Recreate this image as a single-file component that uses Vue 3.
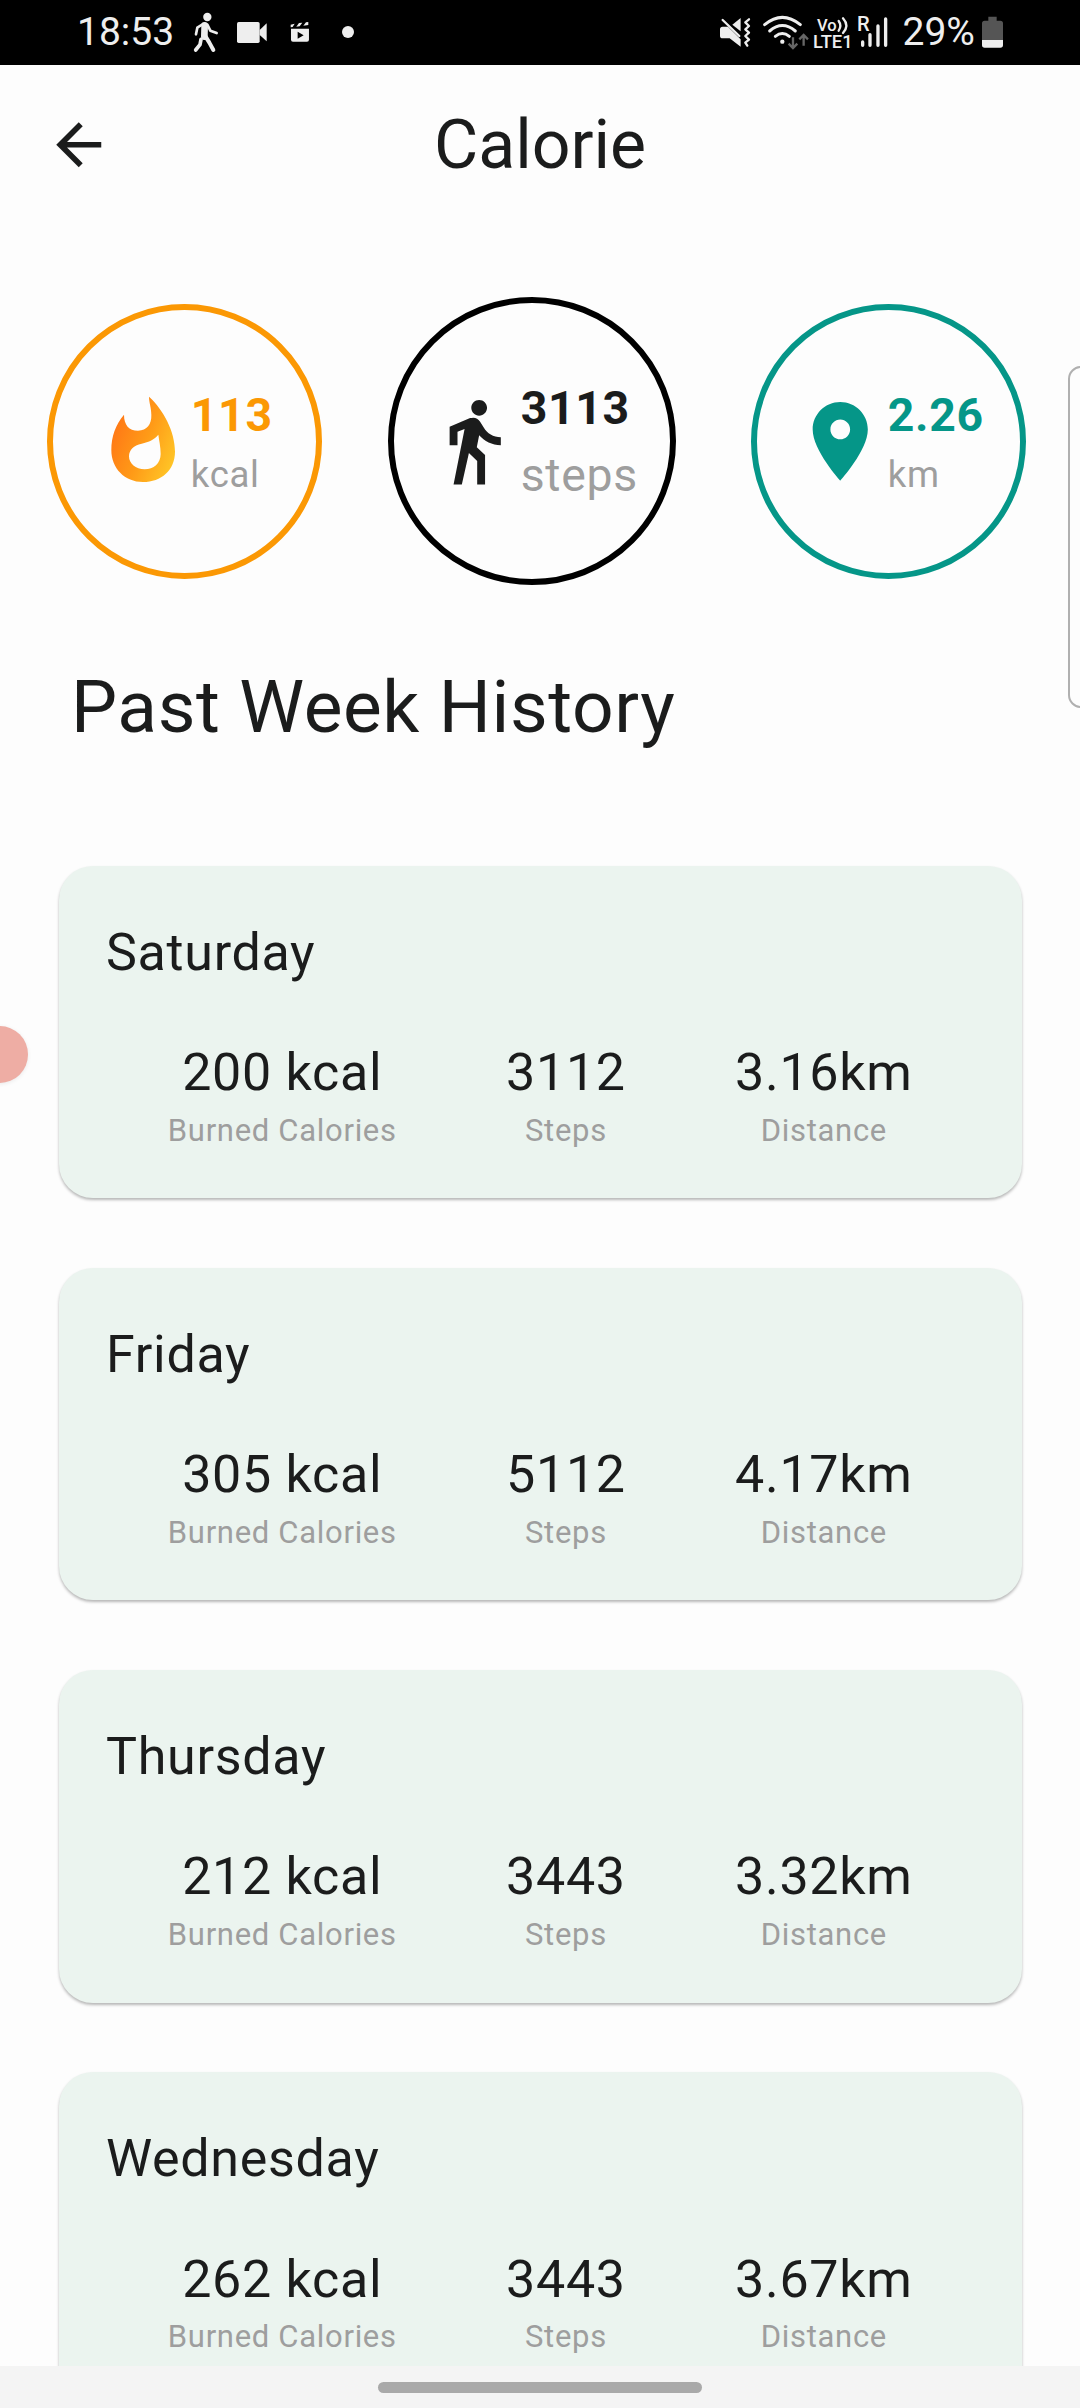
<template>
  <div class="screen">
    <!-- Status bar -->
    <div class="status-bar">
      <div class="status-left">
        <span class="clock">18:53</span>
        <svg class="walk" viewBox="400 0 78 198">
          <circle cx="443" cy="51" r="12.5" fill="#eee" />
          <g fill="none" stroke="#eee" stroke-linecap="round" stroke-linejoin="round">
            <path d="M435 76L434 110" stroke-width="20" />
            <path d="M430 72L413 83L409 103" stroke-width="8" />
            <path d="M443 74L452 92L471 99" stroke-width="8" />
            <path d="M438 110L449 128L461 150" stroke-width="12" />
            <path d="M424 118L421 134L408 150" stroke-width="11" />
          </g>
        </svg>
        <svg class="video" viewBox="533 0 89 198">
          <rect x="533" y="66" width="68" height="63" rx="5" fill="#eee" />
          <path d="M601 90L622 70V124L601 105Z" fill="#eee" />
        </svg>
        <svg class="clapper" viewBox="690 0 58 198">
          <path d="M693 86H747V119Q747 125 741 125H699Q693 125 693 119ZM713 95V116L731 105.5Z" fill="#eee" fill-rule="evenodd" />
          <path d="M692 82V74L704 71L698 81ZM709 80L717 69L727 68L719 79ZM730 77L738 67L745 66V75Z" fill="#eee" />
        </svg>
        <span class="dot"></span>
      </div>

      <div class="status-right">
        <svg class="mute" viewBox="60 0 94 198">
          <path d="M60 88Q60 80 68 80H84L122 118V140L89 115H68Q60 115 60 107Z" fill="#eee" />
          <path d="M122 54V94L97 74Z" fill="#eee" />
          <path d="M68 60L118 108" stroke="#eee" stroke-width="7" stroke-linecap="round" />
          <path d="M147 58L136 67L147 78L136 88L147 98L136 108L147 119L136 128L142 137" fill="none" stroke="#eee" stroke-width="7" stroke-linejoin="round" stroke-linecap="round" />
        </svg>
        <svg class="wifi" viewBox="190 0 136 198">
          <g fill="none" stroke="#eee" stroke-width="9" stroke-linecap="round">
            <path d="M195 74Q248 30 302 74" />
            <path d="M210 93Q248 60 287 93" />
            <path d="M227 109Q248 92 269 109" />
          </g>
          <circle cx="248" cy="125" r="6.5" fill="#eee" />
          <g fill="none" stroke="#666" stroke-width="7">
            <path d="M280 112V142M267 131L280 144L293 131" />
            <path d="M312 137V106M299 118L312 105L325 118" />
          </g>
        </svg>
        <svg class="volte" viewBox="340 0 120 198">
          <text x="352" y="93" font-size="51" textLength="59" lengthAdjust="spacingAndGlyphs" class="status-glyph">Vo</text>
          <g fill="none" stroke="#eee" stroke-width="7" stroke-linecap="round">
            <path d="M417 63Q427 77 417 92" />
            <path d="M430 55Q450 77 430 99" />
          </g>
          <text x="340" y="144" font-size="53" textLength="119" lengthAdjust="spacingAndGlyphs" class="status-glyph">LTE1</text>
        </svg>
        <svg class="signal" viewBox="472 0 94 198">
          <text x="472" y="94" font-size="58" textLength="38" lengthAdjust="spacingAndGlyphs" class="status-glyph">R</text>
          <path d="M489 126V136M511 104V136M535 78V136M558 57V136" stroke="#eee" stroke-width="10" stroke-linecap="round" />
        </svg>
        <span class="battery-level">29%</span>
        <svg class="battery" viewBox="846 0 63 198">
          <path d="M865 50H890V62H901Q909 62 909 70V122H846V70Q846 62 854 62H865Z" fill="#555" />
          <path d="M846 120H909V135Q909 143 901 143H854Q846 143 846 135Z" fill="#eee" />
        </svg>
      </div>
    </div>

    <!-- App bar -->
    <header class="app-bar">
      <svg class="back" viewBox="0 0 24 24">
        <path d="M20 11H7.83l5.59-5.59L12 4l-8 8 8 8 1.41-1.41L7.83 13H20v-2z" />
      </svg>
      <h1>Calorie</h1>
    </header>

    <main class="content">
      <section class="rings">
        <div
          v-for="ring in rings"
          :key="ring.unit"
          class="ring"
          :class="`ring-${ring.type}`"
        >
          <svg v-if="ring.type === 'calorie'" class="ring-icon" viewBox="199 312 283.5 283.5">
            <defs>
              <linearGradient id="flame" x1="0" y1="0.3" x2="1" y2="0.85">
                <stop offset="0" stop-color="#ff7416" />
                <stop offset="0.5" stop-color="#ff9a17" />
                <stop offset="1" stop-color="#ffc928" />
              </linearGradient>
            </defs>
            <path
              fill="url(#flame)"
              fill-rule="evenodd"
              d="M358 320C402 360 436 425 436 485C436 540 395 576 340 576C285 576 245 535 245 480C245 440 258 403 283 374C283 405 298 422 325 422C352 422 366 402 365 375C365 352 358 338 358 320ZM386 434C388 450 393 470 393 492C393 520 372 538 345 538C318 538 298 521 298 499C298 480 312 466 336 461C358 456 374 448 386 434Z"
            />
          </svg>
          <svg v-else-if="ring.type === 'steps'" class="ring-icon" viewBox="0 0 24 24">
            <path d="M13.5 5.5c1.1 0 2-.9 2-2s-.9-2-2-2-2 .9-2 2 .9 2 2 2zM9.8 8.9L7 23h2.1l1.8-8 2.1 2v6h2v-7.5l-2.1-2 .6-3C14.8 12 16.8 13 19 13v-2c-1.9 0-3.5-1-4.3-2.4l-1-1.6c-.4-.6-1-1-1.7-1-.3 0-.5.1-.8.1L6 8.3V13h2V9.6l1.8-.7" />
          </svg>
          <svg v-else class="ring-icon" viewBox="0 0 24 24">
            <path d="M12 2C8.13 2 5 5.13 5 9c0 5.25 7 13 7 13s7-7.75 7-13c0-3.87-3.13-7-7-7zm0 9.5c-1.38 0-2.5-1.12-2.5-2.5s1.12-2.5 2.5-2.5 2.5 1.12 2.5 2.5-1.12 2.5-2.5 2.5z" />
          </svg>
          <div class="ring-text">
            <span class="ring-value">{{ ring.value }}</span>
            <span class="ring-unit">{{ ring.unit }}</span>
          </div>
        </div>
      </section>

      <h2>Past Week History</h2>

      <article v-for="item in history" :key="item.day" class="card">
        <h3>{{ item.day }}</h3>
        <div class="stats">
          <div class="stat">
            <span class="stat-value">{{ item.calories }} kcal</span>
            <span class="stat-label">Burned Calories</span>
          </div>
          <div class="stat">
            <span class="stat-value">{{ item.steps }}</span>
            <span class="stat-label">Steps</span>
          </div>
          <div class="stat">
            <span class="stat-value">{{ item.distance }}km</span>
            <span class="stat-label">Distance</span>
          </div>
        </div>
      </article>
    </main>

    <div class="nav-bar"><span class="nav-handle"></span></div>

    <!-- System overlays -->
    <div class="edge-panel"></div>
    <div class="bubble"></div>
  </div>
</template>

<script setup>
const rings = [
  { type: 'calorie', value: '113', unit: 'kcal' },
  { type: 'steps', value: '3113', unit: 'steps' },
  { type: 'distance', value: '2.26', unit: 'km' }
]

const history = [
  { day: 'Saturday', calories: 200, steps: 3112, distance: 3.16 },
  { day: 'Friday', calories: 305, steps: 5112, distance: 4.17 },
  { day: 'Thursday', calories: 212, steps: 3443, distance: 3.32 },
  { day: 'Wednesday', calories: 262, steps: 3443, distance: 3.67 }
]
</script>

<style>
body {
  margin: 0;
  background: #fdfdfd;
}
</style>

<style scoped>
.screen {
  position: relative;
  display: flex;
  flex-direction: column;
  width: 1080px;
  height: 2408px;
  overflow: hidden;
  background: #fdfdfd;
  color: #1b1c1c;
  font-family: Roboto, "Liberation Sans", sans-serif;
  letter-spacing: 0.7px;
}
h1, h2, h3 {
  margin: 0;
  font-weight: 400;
}
svg {
  display: block;
  flex: none;
}

/* Status bar */
.status-bar {
  display: flex;
  flex: none;
  justify-content: space-between;
  height: 65px;
  padding: 0 77px;
  background: #000;
  color: #eee;
  letter-spacing: 0;
}
.status-left,
.status-right {
  display: flex;
  height: 66px;
}
.status-bar svg {
  height: 66px;
}
.clock,
.battery-level {
  font-size: 39px;
  line-height: 65px;
}
.clock {
  width: 116px;
}
.status-glyph {
  fill: #eee;
  font-weight: 500;
}
.walk { width: 26px; }
.video { width: 29.7px; margin-left: 18.4px; }
.clapper { width: 19.3px; margin-left: 22.6px; }
.dot {
  width: 12px;
  height: 12px;
  margin: 26px 0 0 33px;
  border-radius: 50%;
  background: #eee;
}
.mute { width: 31.3px; }
.wifi { width: 45.3px; margin-left: 12px; }
.volte { width: 40px; margin-left: 4.7px; }
.signal { width: 31.3px; margin-left: 4px; }
.battery-level { width: 79.5px; margin-left: 14px; }
.battery { width: 21px; }

/* App bar */
.app-bar {
  display: grid;
  flex: none;
  grid-template-columns: 68px 1fr 68px;
  align-items: center;
  height: 159px;
  padding: 0 45px;
}
.back {
  width: 67.5px;
  height: 67.5px;
  fill: #1b1c1c;
}
.app-bar h1 {
  font-size: 68px;
  line-height: 80px;
  letter-spacing: 0;
  text-align: center;
}

.content {
  flex: 1;
  min-height: 0;
  overflow: hidden;
}

/* Summary rings */
.rings {
  display: flex;
  align-items: center;
  height: 288px;
  margin-top: 73px;
  padding-left: 47px;
}
.ring {
  display: flex;
  flex: none;
  align-items: center;
  justify-content: center;
  box-sizing: border-box;
  width: 275px;
  height: 275px;
  border: 6px solid currentColor;
  border-radius: 50%;
}
.ring-calorie {
  color: #fb9804;
}
.ring-steps {
  width: 288px;
  height: 288px;
  margin: 0 75px 0 66px;
  border-color: #000;
}
.ring-distance {
  color: #059688;
}
.ring-icon {
  width: 94.5px;
  height: 94.5px;
  fill: currentColor;
}
.ring-text {
  display: flex;
  flex-direction: column;
  gap: 13.5px;
  padding-top: 3px;
}
.ring-value {
  font-size: 46.4px;
  font-weight: 700;
  line-height: 52px;
}
.ring-unit {
  color: #9e9e9e;
  font-size: 36.56px;
  line-height: 42px;
}
.ring-steps .ring-text {
  gap: 15px;
  padding-top: 1px;
}
.ring-steps .ring-unit {
  font-size: 46.4px;
  line-height: 52px;
}

/* History */
h2 {
  margin: 79px 0 115.7px 71px;
  font-size: 73.125px;
  line-height: 86px;
  letter-spacing: 0.6px;
}
.card {
  box-sizing: border-box;
  height: 332.6px;
  margin: 0 58px 69.6px 58.5px;
  padding-top: 57px;
  border-radius: 34px;
  background: #ebf4ef;
  box-shadow: 0 2px 3px rgba(0, 0, 0, 0.28);
}
.card h3 {
  padding-left: 47.5px;
  font-size: 52px;
  line-height: 60px;
}
.stats {
  display: flex;
  justify-content: space-evenly;
  margin-top: 60.3px;
}
.stat {
  display: flex;
  flex-direction: column;
  align-items: center;
}
.stat-value {
  font-size: 52px;
  line-height: 60px;
}
.stat-label {
  margin-top: 9.7px;
  color: #9e9e9e;
  font-size: 31px;
  line-height: 36px;
}

/* System navigation */
.nav-bar {
  display: flex;
  flex: none;
  justify-content: center;
  height: 42px;
  background: #f4f4f4;
}
.nav-handle {
  width: 324px;
  height: 11px;
  margin-top: 16px;
  border-radius: 6px;
  background: #a9a9a9;
}

.edge-panel {
  position: absolute;
  top: 366px;
  right: -20px;
  box-sizing: border-box;
  width: 32px;
  height: 342px;
  border: 2px solid #b0b0b0;
  border-radius: 13px;
}
.bubble {
  position: absolute;
  top: 1026px;
  left: -29px;
  width: 57px;
  height: 57px;
  border-radius: 50%;
  background: #eeada4;
  box-shadow: 0 1px 4px rgba(0, 0, 0, 0.08);
}
</style>
